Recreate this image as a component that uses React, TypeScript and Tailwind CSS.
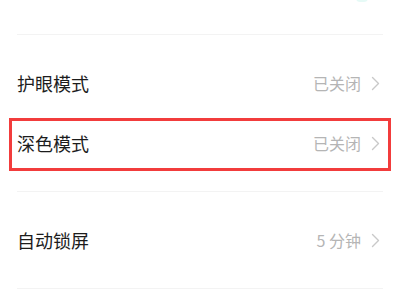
import React from "react";

const Chevron = () => (
  <svg width="9" height="15" viewBox="0 0 9 15" fill="none" className="shrink-0">
    <path d="M1.5 1.5 L7.5 7.5 L1.5 13.5" stroke="#c9c9c9" strokeWidth="1.4" strokeLinecap="round" strokeLinejoin="round" />
  </svg>
);

const Row = ({ title, value, highlight }: { title: string; value: string; highlight?: boolean }) => (
  <div className="relative flex h-[60px] items-center justify-between">
    <span className="text-[18px] leading-none text-[#1c1c1c]">{title}</span>
    <div className="flex items-center gap-[10px] pr-[3px]">
      <span className="text-[16px] leading-none text-[#b5b5b5]">{value}</span>
      <Chevron />
    </div>
    {highlight && (
      <div className="pointer-events-none absolute left-[-8px] right-[-8px] top-[5px] bottom-[2px] border-[3px] border-[#f23c3c]" />
    )}
  </div>
);

export default function App() {
  return (
    <div
      className="h-[300px] w-[400px] overflow-hidden bg-white"
      style={{ fontFamily: '"Noto Sans CJK SC", "Noto Sans", sans-serif' }}
    >
      <div className="px-[17px]">
        <div className="relative h-[35px] border-b border-[#f3f3f3]">
          <div className="absolute right-[15px] top-[-6px] h-[8px] w-[12px] rounded-full bg-[#e6faf6]" />
        </div>
        <div className="border-b border-[#f3f3f3] py-[18px]">
          <Row title="护眼模式" value="已关闭" />
          <Row title="深色模式" value="已关闭" highlight />
        </div>
        <div className="border-b border-[#f3f3f3] py-[18px]">
          <Row title="自动锁屏" value="5 分钟" />
        </div>
      </div>
    </div>
  );
}
